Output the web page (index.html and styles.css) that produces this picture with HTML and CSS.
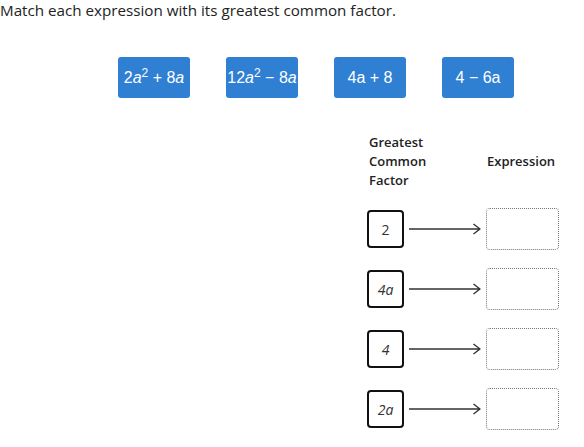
FILE: index.html
```html
<!DOCTYPE html>
<html>
<head>
<meta charset="utf-8">
<link rel="stylesheet" href="styles.css">
</head>
<body>
<p class="prompt">Match each expression with its greatest common factor.</p>
<div class="tiles">
  <div class="tile"><span>2<i>a</i><sup>2</sup> + 8<i>a</i></span></div>
  <div class="tile"><span>12<i>a</i><sup>2</sup> − 8<i>a</i></span></div>
  <div class="tile"><span>4a + 8</span></div>
  <div class="tile"><span>4 − 6a</span></div>
</div>
<div class="match">
  <div class="head">
    <div class="head-gcf">Greatest<br>Common<br>Factor</div>
    <div class="head-exp">Expression</div>
  </div>
  <div class="rows">
    <div class="row">
      <div class="factor"><span>2</span></div>
      <svg class="arrow" width="72" height="14" viewBox="0 0 72 14"><path d="M0 7H71M64.5 2L71 7L64.5 12" fill="none" stroke="#333" stroke-width="1.4"/></svg>
      <div class="drop"></div>
    </div>
    <div class="row">
      <div class="factor"><i>4a</i></div>
      <svg class="arrow" width="72" height="14" viewBox="0 0 72 14"><path d="M0 7H71M64.5 2L71 7L64.5 12" fill="none" stroke="#333" stroke-width="1.4"/></svg>
      <div class="drop"></div>
    </div>
    <div class="row">
      <div class="factor"><i>4</i></div>
      <svg class="arrow" width="72" height="14" viewBox="0 0 72 14"><path d="M0 7H71M64.5 2L71 7L64.5 12" fill="none" stroke="#333" stroke-width="1.4"/></svg>
      <div class="drop"></div>
    </div>
    <div class="row">
      <div class="factor"><i>2a</i></div>
      <svg class="arrow" width="72" height="14" viewBox="0 0 72 14"><path d="M0 7H71M64.5 2L71 7L64.5 12" fill="none" stroke="#333" stroke-width="1.4"/></svg>
      <div class="drop"></div>
    </div>
  </div>
</div>
</body>
</html>
```

FILE: styles.css
```css
html, body {
  margin: 0;
  padding: 0;
  background: #fff;
}
body {
  font-family: "Open Sans", "Liberation Sans", sans-serif;
  color: #222;
}
.prompt {
  margin: 0;
  padding: 1px 0 0 0;
  font-size: 15.2px;
  line-height: 19px;
}
.tiles {
  display: flex;
  gap: 36px;
  padding-left: 118px;
  margin-top: 37px;
}
.tile {
  width: 72px;
  height: 41px;
  background: #2f80d3;
  border-radius: 3px;
  color: #fff;
  font-family: "Liberation Sans", Arial, sans-serif;
  font-size: 16px;
  display: flex;
  align-items: center;
  justify-content: center;
  white-space: nowrap;
}
.tile sup {
  font-size: 12px;
  line-height: 0;
  vertical-align: 6px;
}
.match {
  margin-left: 367px;
  margin-top: 35px;
  width: 192px;
}
.head {
  display: flex;
  align-items: center;
  font-size: 13px;
  font-weight: 600;
  line-height: 19px;
  color: #222;
}
.head-gcf {
  width: 116px;
  padding-left: 2px;
}
.head-exp {
  padding-left: 2px;
}
.rows {
  margin-top: 18px;
  display: flex;
  flex-direction: column;
  gap: 18px;
}
.row {
  display: flex;
  align-items: center;
  height: 42px;
}
.factor {
  box-sizing: border-box;
  width: 37px;
  height: 38px;
  border: 2px solid #111;
  border-radius: 4px;
  display: flex;
  align-items: center;
  justify-content: center;
  font-size: 14px;
  color: #333;
}
.arrow {
  display: block;
  margin: 0 5px;
}
.drop {
  box-sizing: border-box;
  width: 73px;
  height: 42px;
  border: 1px dotted #777;
  border-radius: 4px;
}
```
